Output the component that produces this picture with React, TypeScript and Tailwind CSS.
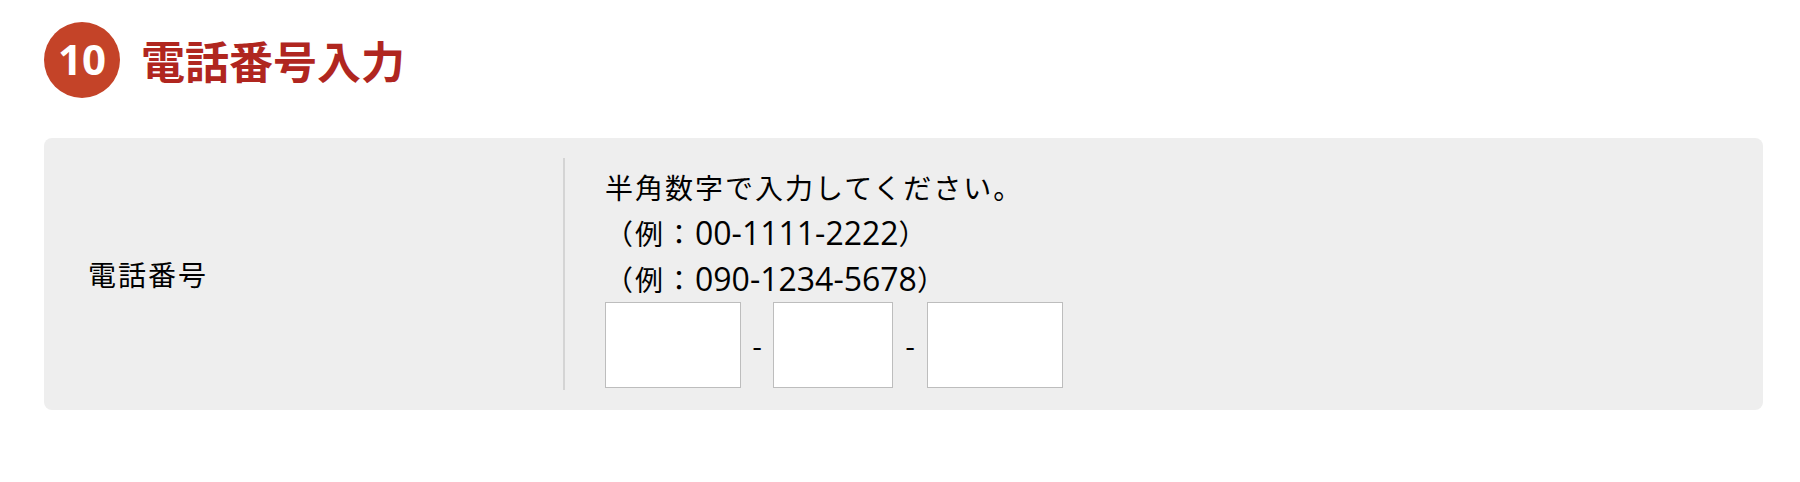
export default function App() {
  const num = "font-['Open_Sans',sans-serif] text-[32px] tracking-normal";
  return (
    <div className="w-[1800px] h-[482px] bg-white font-['Noto_Sans_CJK_JP','Noto_Sans',sans-serif] text-black">
      <div className="flex items-center pl-[44px] pt-[22px]">
        <div className="w-[76px] h-[76px] rounded-full bg-[#c44328] flex items-center justify-center text-white text-[42px] font-bold leading-none font-['Open_Sans','Noto_Sans_CJK_JP',sans-serif] pb-[2px]">
          10
        </div>
        <h2 className="ml-[21px] text-[44px] font-bold leading-none text-[#b0261f]">電話番号入力</h2>
      </div>
      <div className="mt-[40px] ml-[44px] mr-[37px] h-[272px] rounded-lg bg-[#eeeeee] flex py-[20px]">
        <div className="w-[519px] shrink-0 pl-[44px] flex items-center text-[28px] tracking-[2px]">電話番号</div>
        <div className="border-l-2 border-[#d4d4d4] pl-[40px] pt-[6px] flex flex-col">
          <p className="text-[28px] leading-[46px] tracking-[2px] h-[46px]">半角数字で入力してください。</p>
          <p className="text-[28px] leading-[46px] tracking-[2px] h-[46px] whitespace-nowrap">
            （例：<span className={num}>00-1111-2222</span>）
          </p>
          <p className="text-[28px] leading-[46px] tracking-[2px] h-[46px] whitespace-nowrap">
            （例：<span className={num}>090-1234-5678</span>）
          </p>
          <div className="flex items-center">
            <input type="text" className="w-[136px] h-[86px] bg-white border border-[#bdbdbd] outline-none" />
            <span className="w-[32px] text-center text-[28px] leading-none">-</span>
            <input type="text" className="w-[120px] h-[86px] bg-white border border-[#bdbdbd] outline-none" />
            <span className="w-[34px] text-center text-[28px] leading-none">-</span>
            <input type="text" className="w-[136px] h-[86px] bg-white border border-[#bdbdbd] outline-none" />
          </div>
        </div>
      </div>
    </div>
  );
}
